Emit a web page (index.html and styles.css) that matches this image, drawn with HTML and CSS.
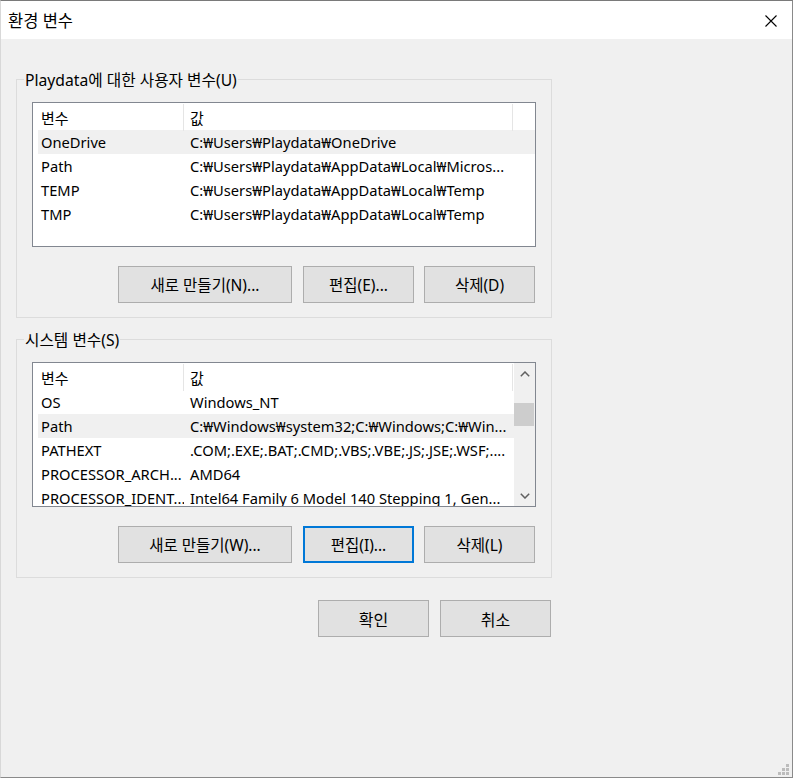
FILE: index.html
```html
<!DOCTYPE html>
<html lang="ko">
<head>
<meta charset="utf-8">
<title>환경 변수</title>
<link rel="stylesheet" href="styles.css">
</head>
<body>
<div class="window">
  <div class="titlebar">
    <span class="title">환경 변수</span>
    <svg class="close" width="12" height="12" viewBox="0 0 12 12"><path d="M0.5 0.5 L11.5 11.5 M11.5 0.5 L0.5 11.5" stroke="#000" stroke-width="1.1" fill="none"/></svg>
  </div>
  <div class="content">
    <div class="group">
      <div class="group-label">Playdata에 대한 사용자 변수(U)</div>
      <div class="list">
        <div class="list-body">
          <div class="header">
            <div class="hcell c1">변수</div>
            <div class="hcell c2">값</div>
          </div>
          <div class="row selected"><div class="cell">OneDrive</div><div class="cell v">C:₩Users₩Playdata₩OneDrive</div></div>
          <div class="row"><div class="cell">Path</div><div class="cell v">C:₩Users₩Playdata₩AppData₩Local₩Micros...</div></div>
          <div class="row"><div class="cell">TEMP</div><div class="cell v">C:₩Users₩Playdata₩AppData₩Local₩Temp</div></div>
          <div class="row"><div class="cell">TMP</div><div class="cell v">C:₩Users₩Playdata₩AppData₩Local₩Temp</div></div>
        </div>
      </div>
      <div class="buttons">
        <div class="btn wide">새로 만들기(N)...</div>
        <div class="btn">편집(E)...</div>
        <div class="btn">삭제(D)</div>
      </div>
    </div>

    <div class="group second">
      <div class="group-label">시스템 변수(S)</div>
      <div class="list">
        <div class="list-body">
          <div class="header">
            <div class="hcell c1">변수</div>
            <div class="hcell c2">값</div>
          </div>
          <div class="row"><div class="cell">OS</div><div class="cell v">Windows_NT</div></div>
          <div class="row selected"><div class="cell">Path</div><div class="cell v">C:₩Windows₩system32;C:₩Windows;C:₩Win...</div></div>
          <div class="row"><div class="cell">PATHEXT</div><div class="cell v">.COM;.EXE;.BAT;.CMD;.VBS;.VBE;.JS;.JSE;.WSF;....</div></div>
          <div class="row"><div class="cell">PROCESSOR_ARCH...</div><div class="cell v">AMD64</div></div>
          <div class="row"><div class="cell">PROCESSOR_IDENT...</div><div class="cell v">Intel64 Family 6 Model 140 Stepping 1, Gen...</div></div>
        </div>
        <div class="scrollbar">
          <div class="arrow"><svg width="10" height="6" viewBox="0 0 10 6"><path d="M0.8 5.2 L5 1 L9.2 5.2" stroke="#606060" stroke-width="1.5" fill="none"/></svg></div>
          <div class="track"><div class="thumb"></div></div>
          <div class="arrow"><svg width="10" height="6" viewBox="0 0 10 6"><path d="M0.8 0.8 L5 5 L9.2 0.8" stroke="#606060" stroke-width="1.5" fill="none"/></svg></div>
        </div>
      </div>
      <div class="buttons">
        <div class="btn wide">새로 만들기(W)...</div>
        <div class="btn focused">편집(I)...</div>
        <div class="btn">삭제(L)</div>
      </div>
    </div>

    <div class="dialog-buttons">
      <div class="btn">확인</div>
      <div class="btn">취소</div>
    </div>
  </div>
  <svg class="grip" width="12" height="12" viewBox="0 0 12 12">
    <rect x="8" y="0" width="3" height="3" fill="#bcbcbc"/>
    <rect x="4" y="4" width="3" height="3" fill="#bcbcbc"/>
    <rect x="8" y="4" width="3" height="3" fill="#bcbcbc"/>
    <rect x="0" y="8" width="3" height="3" fill="#bcbcbc"/>
    <rect x="4" y="8" width="3" height="3" fill="#bcbcbc"/>
    <rect x="8" y="8" width="3" height="3" fill="#bcbcbc"/>
  </svg>
</div>
</body>
</html>
```
FILE: styles.css
```css
* { box-sizing: border-box; }
html, body { margin: 0; padding: 0; }
body {
  font-family: "Noto Sans", "Noto Sans CJK KR", sans-serif;
  font-size: 15px;
  color: #000;
  background: #f0f0f0;
}
.window {
  width: 793px;
  height: 778px;
  position: relative;
  background: #f0f0f0;
  border-top: 1px solid #7a7a7a;
  border-right: 1px solid #8a8a8a;
  border-bottom: 1px solid #8a8a8a;
  border-left: 1px solid #d8d8d8;
  display: flex;
  flex-direction: column;
  overflow: hidden;
}
.titlebar {
  height: 38px;
  background: #fff;
  display: flex;
  align-items: center;
  justify-content: space-between;
  padding: 0 15px 0 7px;
  flex: none;
}
.title { line-height: 20px; padding-top: 1px; font-size: 16.5px; }
.close { display: block; margin-top: 1px; }
.content {
  padding: 40px 0 0 15px;
  display: flex;
  flex-direction: column;
}
.group {
  width: 536px;
  border: 1px solid #dcdcdc;
  padding: 0 15px 14px 15px;
  display: flex;
  flex-direction: column;
}
.group.second { margin-top: 21px; }
.group-label {
  align-self: flex-start;
  line-height: 22px;
  height: 22px;
  margin: -11px 0 0 -8px;
  padding: 0 1px;
  background: #f0f0f0;
  white-space: nowrap;
  font-size: 15.7px;
}
.list {
  margin-top: 11px;
  height: 145px;
  border: 1px solid #828790;
  background: #fff;
  display: flex;
  overflow: hidden;
}
.list-body {
  flex: 1;
  overflow: hidden;
  padding-left: 5px;
  font-size: 14.7px;
}
.header {
  display: grid;
  grid-template-columns: 146px 329px;
  height: 27px;
  font-size: 15px;
}
.hcell {
  padding: 2px 0 0 3px;
  line-height: 25px;
  border-right: 1px solid #e5e5e5;
  margin: 1px 0 0 0;
}
.hcell.c2 { padding-left: 6px; }
.row {
  display: grid;
  grid-template-columns: 146px 329px;
  height: 24px;
  line-height: 24px;
}
.row.selected { background: #f0f0f0; }
.cell {
  padding-left: 3px;
  white-space: nowrap;
  overflow: hidden;
}
.cell.v { padding-left: 6px; }
.scrollbar {
  width: 21px;
  flex: none;
  background: #f0f0f0;
  display: flex;
  flex-direction: column;
}
.arrow {
  height: 21px;
  display: flex;
  align-items: center;
  justify-content: center;
  flex: none;
}
.arrow svg { display: block; }
.track {
  flex: 1;
  padding-top: 19px;
}
.thumb {
  width: 20px;
  height: 23px;
  background: #cdcdcd;
}
.buttons {
  margin-top: 19px;
  display: flex;
  justify-content: flex-end;
  padding-right: 1px;
}
.btn {
  width: 111px;
  height: 37px;
  background: #e1e1e1;
  border: 1px solid #adadad;
  display: flex;
  align-items: center;
  justify-content: center;
  white-space: nowrap;
  margin-left: 10px;
  font-size: 15.5px;
}
.btn.wide { width: 174px; margin-left: 0; }
.buttons .btn:nth-child(2) { margin-left: 11px; }
.btn.focused { border: 2px solid #0078d7; }
.dialog-buttons {
  width: 536px;
  margin-top: 22px;
  display: flex;
  justify-content: flex-end;
  padding-right: 1px;
}
.dialog-buttons .btn { font-size: 16px; }
.dialog-buttons .btn:last-child { margin-left: 11px; }
.grip {
  position: absolute;
  right: 2px;
  bottom: 1px;
}
```
